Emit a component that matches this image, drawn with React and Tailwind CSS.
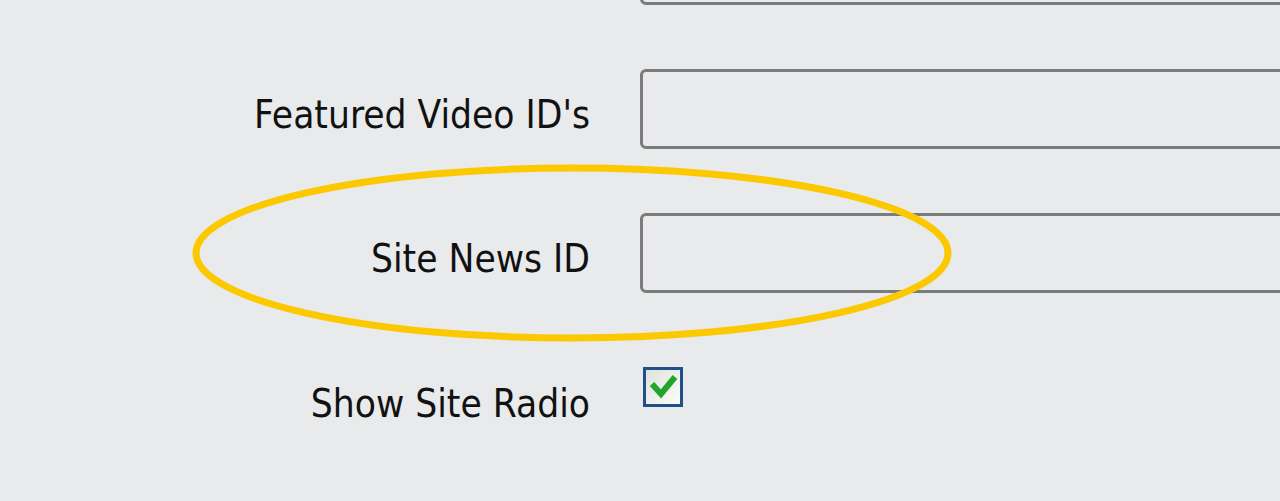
export default function App() {
  const font = { fontFamily: '"DejaVu Sans Condensed", "DejaVu Sans", sans-serif' };
  return (
    <div className="relative h-[501px] w-[1280px] overflow-hidden bg-[#e8eaeb] text-[38.5px] text-[#111]" style={font}>
      <div className="flex flex-col gap-[64px] mt-[-75px]">
        <div className="flex items-center h-[80px]">
          <div className="w-[590px] shrink-0" />
          <div className="ml-[50px] h-[80px] w-[700px] shrink-0 rounded-[6px] border-[3px] border-[#7b7b7b] bg-[#e8eaeb]" />
        </div>
        <div className="flex items-center h-[80px]">
          <div className="w-[590px] shrink-0 text-right mt-[12px] leading-none">Featured Video ID's</div>
          <div className="ml-[50px] h-[80px] w-[700px] shrink-0 rounded-[6px] border-[3px] border-[#7b7b7b] bg-[#e8eaeb]" />
        </div>
        <div className="flex items-center h-[80px]">
          <div className="w-[590px] shrink-0 text-right mt-[12px] leading-none">Site News ID</div>
          <div className="ml-[50px] h-[80px] w-[700px] shrink-0 rounded-[6px] border-[3px] border-[#7b7b7b] bg-[#e8eaeb]" />
        </div>
        <div className="flex items-start h-[80px]">
          <div className="w-[590px] shrink-0 text-right mt-[28px] leading-none">Show Site Radio</div>
          <div className="ml-[53px] mt-[10px] h-[40px] w-[40px] shrink-0 border-[3px] border-[#1f5189] bg-gradient-to-br from-[#e2e2dc] to-[#fbfbf8]">
            <svg width="34" height="34" viewBox="0 0 34 34" className="block">
              <path d="M6 14 L15 24 L29 7" fill="none" stroke="#22a52b" strokeWidth="6" strokeLinejoin="miter" />
            </svg>
          </div>
        </div>
      </div>
      <svg className="absolute inset-0 pointer-events-none" width="1280" height="501">
        <ellipse cx="572" cy="253" rx="376" ry="85" fill="none" stroke="#fcc800" strokeWidth="7" />
      </svg>
    </div>
  );
}
